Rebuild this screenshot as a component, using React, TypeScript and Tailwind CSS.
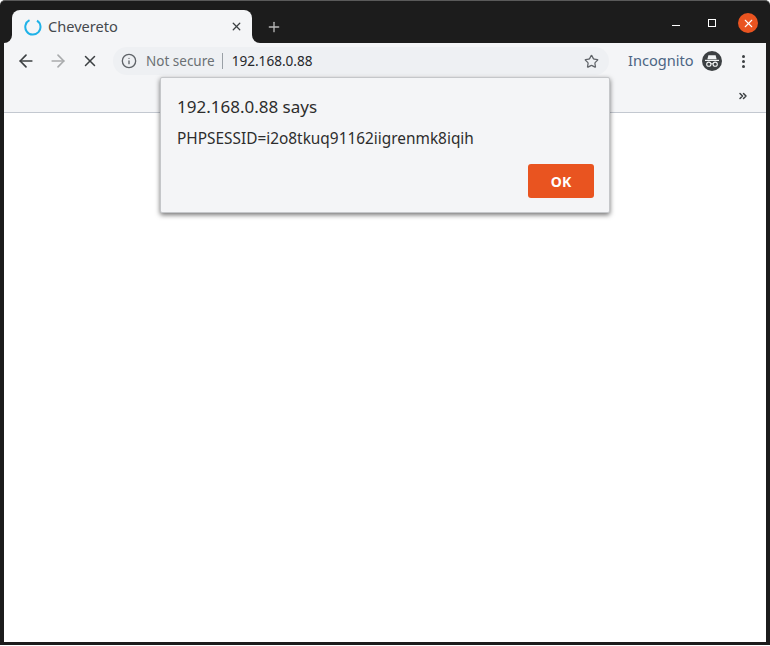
import { Info, Star, ArrowLeft, ArrowRight, X, Plus, ChevronsRight } from "lucide-react";

function IncognitoIcon() {
  return (
    <svg width="20" height="20" viewBox="0 0 20 20" aria-hidden>
      <circle cx="10" cy="10" r="10" fill="#3c4043" />
      <path d="M6.4 4.2h7.2l1 4H5.4z" fill="#f1f3f4" />
      <rect x="3" y="8.8" width="14" height="1.2" fill="#f1f3f4" />
      <circle cx="6.8" cy="13.2" r="2.1" fill="none" stroke="#f1f3f4" strokeWidth="1.1" />
      <circle cx="13.2" cy="13.2" r="2.1" fill="none" stroke="#f1f3f4" strokeWidth="1.1" />
      <path d="M8.9 12.8h2.2" stroke="#f1f3f4" strokeWidth="1" />
    </svg>
  );
}

export default function App() {
  return (
    <div className="relative flex h-[646px] w-[770px] flex-col overflow-hidden bg-white font-['Noto_Sans',sans-serif]">
      <div className="relative flex min-h-0 flex-1 flex-col rounded-t-[5px] border-t border-t-[#5a5a5a] bg-[#1c1c1c] pl-[4px] pr-[4px] pb-[3px] mb-px">
        {/* tab strip */}
        <div className="flex h-[42px] shrink-0 items-end pl-[12px] pr-[11px] -mx-[4px]">
          <div className="relative flex h-[33px] w-[240px] items-center rounded-t-[8px] bg-[#f4f5f7] pl-[12px] pr-[9px]">
            <div className="absolute -left-[8px] bottom-0 h-[8px] w-[8px] bg-[#f4f5f7]">
              <div className="h-full w-full rounded-br-[8px] bg-[#1c1c1c]" />
            </div>
            <div className="absolute -right-[8px] bottom-0 h-[8px] w-[8px] bg-[#f4f5f7]">
              <div className="h-full w-full rounded-bl-[8px] bg-[#1c1c1c]" />
            </div>
            <svg width="18" height="18" viewBox="0 0 18 18" aria-hidden>
              <path d="M5.5 2.2A7.6 7.6 0 1 0 13 2.6" fill="none" stroke="#1fb2e8" strokeWidth="2" />
            </svg>
            <span className="ml-[6px] flex-1 text-[14.6px] text-[#45494d]">Chevereto</span>
            <X size={13} strokeWidth={2.4} className="text-[#3c4043]" />
          </div>
          <Plus size={16} strokeWidth={2} className="mb-[8px] ml-[14px] text-[#b8b8b8]" />
          <div className="mb-[10px] ml-auto flex items-center">
            <div className="mt-[5px] h-[1px] w-[8px] bg-white" />
            <div className="ml-[28px] h-[8px] w-[8px] border border-white" />
            <div className="ml-[22px] mr-[1px] flex h-[20px] w-[20px] items-center justify-center rounded-full bg-[#e95420]">
              <X size={13} strokeWidth={2} className="text-white" />
            </div>
          </div>
        </div>

        {/* toolbar */}
        <div className="flex h-[36px] shrink-0 items-center bg-[#f4f5f7] pl-[12px] pr-[18px]">
          <ArrowLeft size={20} strokeWidth={2} className="text-[#3c4043]" />
          <ArrowRight size={20} strokeWidth={2} className="ml-[12px] text-[#a9abad]" />
          <X size={18} strokeWidth={2} className="ml-[13px] text-[#3c4043]" />
          <div className="ml-[14px] flex h-[28px] w-[496px] items-center rounded-full bg-[#eef0f3] pl-[8px] pr-[10px]">
            <Info size={16} strokeWidth={2} className="text-[#5f6368]" />
            <span className="ml-[9px] text-[13.5px] text-[#6b7074]">Not secure</span>
            <div className="ml-[7px] h-[16px] w-px bg-[#9aa0a6]" />
            <span className="ml-[9px] text-[13.6px] text-[#26282b]">192.168.0.88</span>
            <Star size={15} strokeWidth={2} className="ml-auto text-[#5f6368]" />
          </div>
          <span className="ml-[19px] text-[14.6px] text-[#4c6584]">Incognito</span>
          <div className="ml-[8px]">
            <IncognitoIcon />
          </div>
          <div className="ml-[20px] flex flex-col gap-[2px]">
            <span className="h-[3px] w-[3px] rounded-full bg-[#3c4043]" />
            <span className="h-[3px] w-[3px] rounded-full bg-[#3c4043]" />
            <span className="h-[3px] w-[3px] rounded-full bg-[#3c4043]" />
          </div>
        </div>

        {/* bookmarks bar */}
        <div className="flex h-[34px] shrink-0 items-center justify-end border-b border-[#c3c8d0] bg-[#f4f5f7] pr-[17px]">
          <ChevronsRight size={12} strokeWidth={3} className="text-[#3c4043]" />
        </div>

        {/* page */}
        <div className="min-h-0 flex-1 bg-white" />
      </div>

      {/* alert dialog */}
      <div className="absolute left-[160px] top-[77px] flex h-[136px] w-[450px] flex-col rounded-[2px] border border-[#c5c7ca] bg-[#f4f5f7] pl-[16px] pr-[15px] pt-[17px] shadow-[0_2px_5px_rgba(0,0,0,0.55)]">
        <h1 className="text-[17px] leading-[24px] text-[#2d2d2d]">192.168.0.88 says</h1>
        <p className="mt-[9px] text-[15.4px] leading-[22px] text-[#2d2d2d]">PHPSESSID=i2o8tkuq91162iigrenmk8iqih</p>
        <div className="mt-[14px] flex justify-end">
          <button type="button" className="h-[34px] w-[66px] rounded-[3px] bg-[#e95420] text-[14px] font-bold text-white">
            OK
          </button>
        </div>
      </div>
    </div>
  );
}
